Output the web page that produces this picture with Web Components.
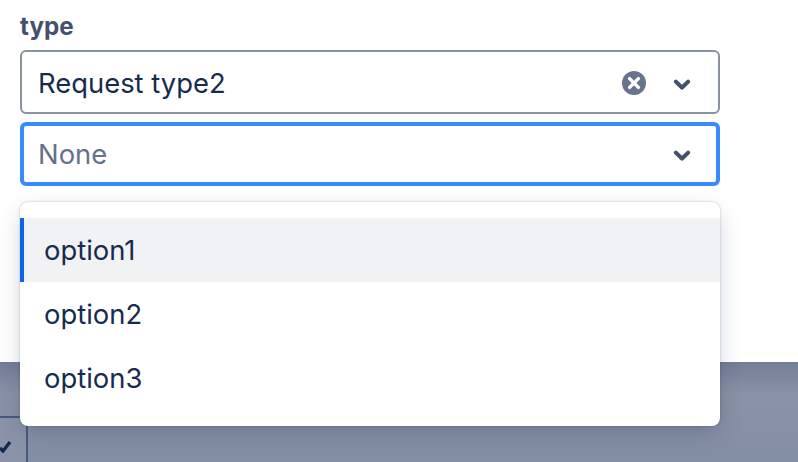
<!DOCTYPE html>
<html>
<head>
<meta charset="utf-8">
<style>
	html,body{ margin:0; height:100%; background:#fff; overflow:hidden; }
	body{ font-family:"Inter","Liberation Sans",sans-serif; }
</style>
</head>
<body>
<type-page>
	<select-field slot="fields" value="Request type2" clearable></select-field>
	<select-field slot="fields" placeholder="None" focused></select-field>
	<select-menu slot="menu">
		<select-option active>option1</select-option>
		<select-option>option2</select-option>
		<select-option>option3</select-option>
	</select-menu>
</type-page>
<script>
const CHEVRON = `<svg width="24" height="24" viewBox="0 0 24 24" aria-hidden="true"><path d="M4.4 9.2a2 2 0 0 1 2.9 0l4.7 4.5 4.7-4.5a2 2 0 0 1 2.9 2.9l-6.1 5.8a2.1 2.1 0 0 1-3 0l-6.1-5.8a2 2 0 0 1 0-2.9z" fill="#42526e"/></svg>`;
const CLEAR = `<svg width="24" height="24" viewBox="0 0 24 24" aria-hidden="true"><circle cx="12" cy="12" r="12" fill="#67748c"/><path d="M7.6 7.6l8.8 8.8M16.4 7.6l-8.8 8.8" stroke="#fff" stroke-width="3.4" stroke-linecap="round"/></svg>`;

class SelectField extends HTMLElement{
	constructor(){
		super();
		const root = this.attachShadow({mode:'open'});
		const value = this.getAttribute('value');
		const text = value || this.getAttribute('placeholder') || '';
		root.innerHTML = `
			<style>
				:host{
					display:flex;
					align-items:center;
					box-sizing:border-box;
					height:64px;
					padding:2px 24px 0 16px;
					background:#fff;
					border:2px solid #8993a4;
					border-radius:6px;
					color:#172b4d;
					font-size:27.4px;
					line-height:32px;
				}
				:host([focused]){
					border:4px solid #388bff;
					padding:0 22px 0 14px;
					color:#65728a;
				}
				.text{ flex:1; }
				.clear{ display:flex; margin-right:24px; }
				.chev{ display:flex; }
			</style>
			<span class="text">${text}</span>
			${this.hasAttribute('clearable') ? `<span class="clear">${CLEAR}</span>` : ''}
			<span class="chev">${CHEVRON}</span>
		`;
	}
}
customElements.define('select-field', SelectField);

class SelectOption extends HTMLElement{
	constructor(){
		super();
		this.attachShadow({mode:'open'}).innerHTML = `
			<style>
				:host{
					display:flex;
					align-items:center;
					box-sizing:border-box;
					height:64px;
					padding-left:24px;
					color:#172b4d;
					font-size:27.4px;
					border-left:0 solid transparent;
				}
				:host([active]){
					background:#f1f2f4;
					border-left:4px solid #0c66e4;
					padding-left:20px;
				}
			</style>
			<slot></slot>
		`;
	}
}
customElements.define('select-option', SelectOption);

class SelectMenu extends HTMLElement{
	constructor(){
		super();
		this.attachShadow({mode:'open'}).innerHTML = `
			<style>
				:host{
					display:block;
					position:absolute;
					top:202px;
					left:20px;
					width:700px;
					box-sizing:border-box;
					padding:16px 0;
					background:#fff;
					border-radius:8px;
					box-shadow:0 8px 24px -4px rgba(9,30,66,.25), 0 0 2px rgba(9,30,66,.31);
				}
			</style>
			<slot></slot>
		`;
	}
}
customElements.define('select-menu', SelectMenu);

class TypePage extends HTMLElement{
	constructor(){
		super();
		this.attachShadow({mode:'open'}).innerHTML = `
			<style>
				:host{ display:flex; flex-direction:column; position:relative; height:462px; }
				.top{
					height:362px;
					box-sizing:border-box;
					padding:11px 78px 0 20px;
					display:flex;
					flex-direction:column;
				}
				label{
					font-size:24.2px;
					line-height:31px;
					font-weight:700;
					color:#42526e;
					margin-bottom:8px;
				}
				.fields{ display:flex; flex-direction:column; gap:8px; }
				.back{
					flex:1;
					background:linear-gradient(#737d94, #8a92a6 32%, #848ea3);
					display:grid;
					grid-template-columns:28px 1fr;
					grid-template-rows:56px 1fr;
				}
				.cell{ grid-column:1; border-bottom:2px solid #4a5a7c; }
				.check{
					grid-column:1;
					grid-row:2;
					background:#8b93a8;
					border-right:2px solid #4a5a7c;
					display:flex;
					align-items:center;
					overflow:hidden;
				}
				.check svg{ margin-top:12px; }
			</style>
			<div class="top">
				<label>type</label>
				<div class="fields"><slot name="fields"></slot></div>
			</div>
			<div class="back">
				<div class="cell"></div>
				<div class="check">
					<svg width="12" height="14" viewBox="0 0 12 14" aria-hidden="true"><path d="M0 9l3 3 7-9" fill="none" stroke="#172b4d" stroke-width="3.4"/></svg>
				</div>
			</div>
			<slot name="menu"></slot>
		`;
	}
}
customElements.define('type-page', TypePage);
</script>
</body>
</html>
